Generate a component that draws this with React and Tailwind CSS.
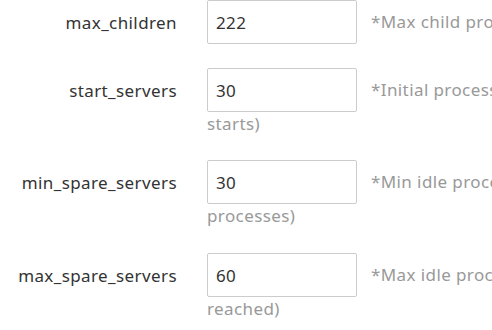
import React from "react";

const rows = [
  { label: "max_children", value: "222", help: "*Max child processes", extra: "", mb: "mb-[24px]" },
  { label: "start_servers", value: "30", help: "*Initial processes (when the service", extra: "starts)", mb: "mb-[24px]" },
  { label: "min_spare_servers", value: "30", help: "*Min idle processes (keep at least this many", extra: "processes)", mb: "mb-[25px]" },
  { label: "max_spare_servers", value: "60", help: "*Max idle processes (clean up when this is", extra: "reached)", mb: "mb-[24px]" },
];

const App = () => {
  return (
    <div
      className="w-[492px] h-[330px] overflow-hidden bg-white text-[17px] tracking-[0.4px] text-[#333]"
      style={{ fontFamily: '"Noto Sans", "Open Sans", sans-serif' }}
    >
      {rows.map((row) => (
        <div key={row.label} className={`flex items-start ${row.mb}`}>
          <label className="w-[177px] h-[44px] shrink-0 text-right leading-[46px] text-[#333]">
            {row.label}
          </label>
          <div className="ml-[30px] w-[600px] shrink-0">
            <div className="flex items-center h-[44px]">
              <input
                type="text"
                defaultValue={row.value}
                className="w-[150px] h-[44px] shrink-0 border border-[#ccc] rounded-[2px] px-[8px] text-[17px] tracking-[0.4px] text-[#333] outline-none"
              />
              <span className="ml-[14px] whitespace-nowrap leading-[44px] text-[#999]">
                {row.help}
              </span>
            </div>
            {row.extra && (
              <div className="leading-[24px] text-[#999]">{row.extra}</div>
            )}
          </div>
        </div>
      ))}
    </div>
  );
};

export default App;
